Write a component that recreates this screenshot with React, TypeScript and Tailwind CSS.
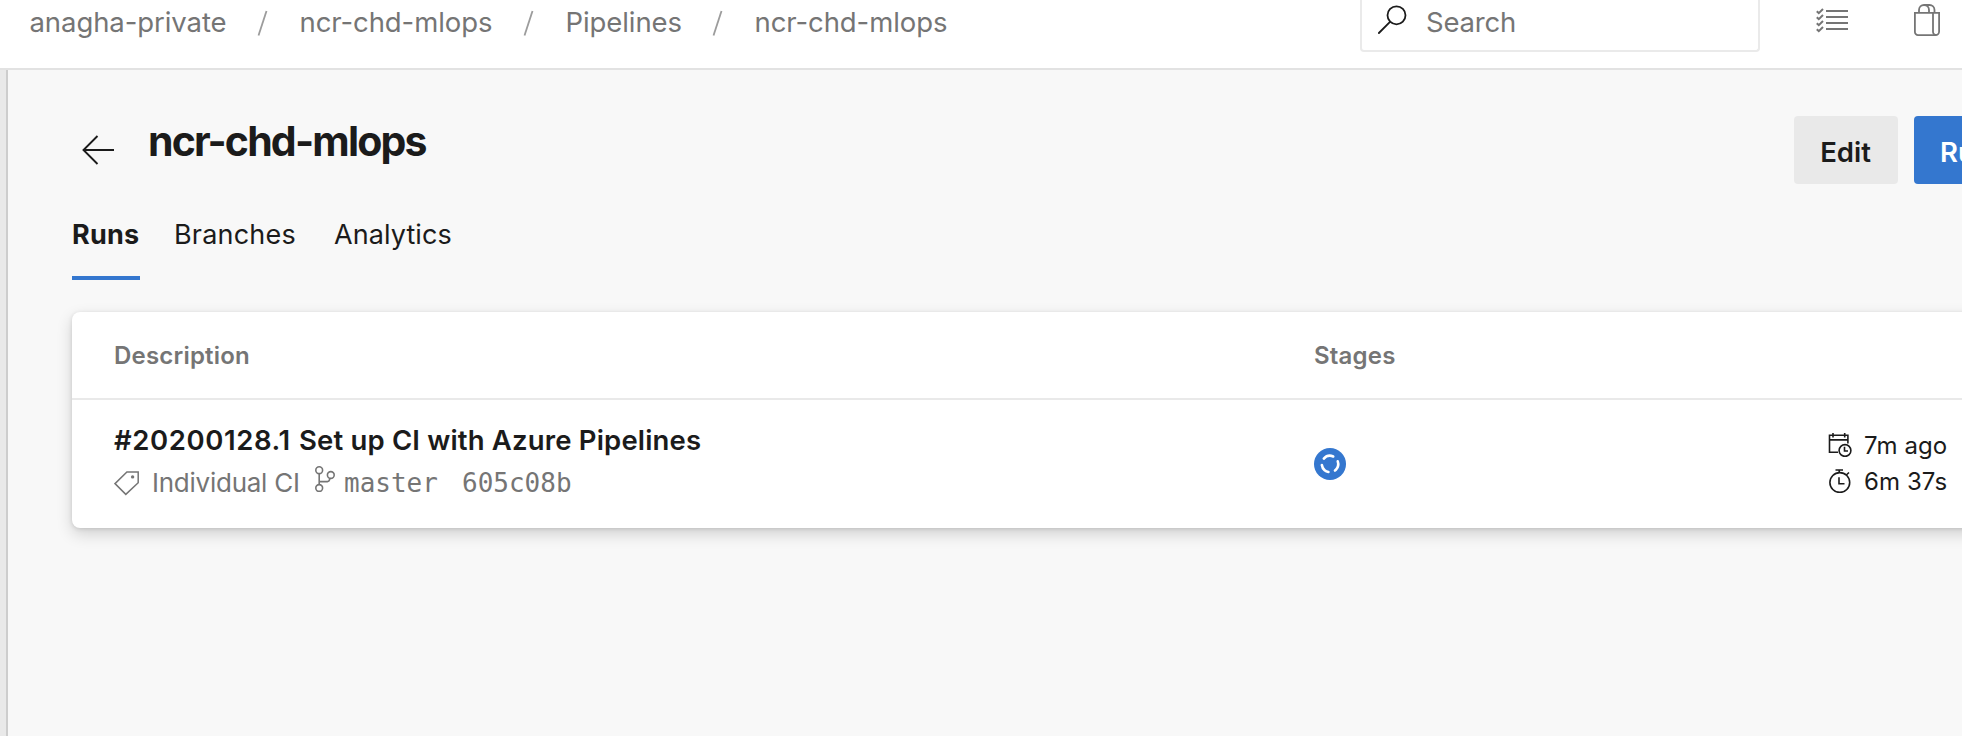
import React from "react";

const crumbs = [
  { label: "anagha-private", width: "w-[198px]" },
  { label: "ncr-chd-mlops", width: "w-[194px]" },
  { label: "Pipelines", width: "w-[117px]" },
  { label: "ncr-chd-mlops", width: "w-[194px]" },
];

function SearchIcon() {
  return (
    <svg className="size-[30px] text-[#1b1b1b]" viewBox="0 0 30 30" fill="none" stroke="currentColor" strokeWidth="1.8">
      <circle cx="18.5" cy="10.3" r="9" />
      <path d="M12 16.8.9 28" strokeLinecap="round" />
    </svg>
  );
}

function ChecklistIcon() {
  return (
    <svg className="h-[26px] w-8" viewBox="0 0 32 26" fill="none" stroke="currentColor">
      <path d="M10 4h22M10 10h22M10 16h22M10 22h22" strokeWidth="2" />
      <path d="M.8 4.2 2.8 6.2 7 2M.8 10.2 2.8 12.2 7 8M.8 16.2 2.8 18.2 7 14M.8 22.2 2.8 24.2 7 20" strokeWidth="2" />
    </svg>
  );
}

function BagIcon() {
  return (
    <svg className="h-8 w-[26px]" viewBox="0 0 26 32" fill="none" stroke="currentColor" strokeWidth="1.8">
      <path d="M.9 8.900h24.200v18.600a3.600 3.600 0 0 1-3.600 3.600H4a3.100 3.100 0 0 1-3.100-3.100Z" />
      <path d="M19 8.900v18.800a3.200 3.200 0 0 0 3.200 3.300" />
      <path d="M5 8.900V6a5 5 0 0 1 5-5c3 0 5 2.200 5 5v2.900M10 1h5.500a5 5 0 0 1 5 5v2.900" />
    </svg>
  );
}

function BackIcon() {
  return (
    <svg className="h-[30px] w-8 text-[#1b1b1b]" viewBox="0 0 32 30" fill="none" stroke="currentColor" strokeWidth="1.9">
      <path d="M32 15H1.500M15.500 1 1.500 15l14 14" />
    </svg>
  );
}

function TagIcon() {
  return (
    <svg className="size-[26px] shrink-0" viewBox="0 0 26 26" fill="none" stroke="currentColor" strokeWidth="1.5">
      <path d="M12.900 1.900h11.300v10.800L11.800 24.400 1 13.600Z" />
      <circle cx="18.600" cy="6.900" r="1.700" fill="currentColor" stroke="none" />
    </svg>
  );
}

function BranchIcon() {
  return (
    <svg className="h-[26px] w-5" viewBox="0 0 20 26" fill="none" stroke="currentColor" strokeWidth="1.6">
      <circle cx="4.200" cy="4.200" r="3.400" />
      <circle cx="4.200" cy="22" r="3.400" />
      <circle cx="15.800" cy="9" r="3.400" />
      <path d="M4.200 7.600v11M4.200 15.600h8.300c1.200 0 2-1 2.400-3.200" />
    </svg>
  );
}

function RunningIcon() {
  return (
    <svg className="size-8" viewBox="0 0 32 32" fill="none">
      <circle cx="16" cy="16" r="16" fill="#3477cf" />
      <circle
        cx="16"
        cy="16"
        r="8.200"
        stroke="#fff"
        strokeWidth="2.600"
        strokeLinecap="round"
        pathLength="360"
        strokeDasharray="72 48"
        transform="rotate(-139 16 16)"
      />
    </svg>
  );
}

function CalendarIcon() {
  return (
    <svg className="size-6" viewBox="0 0 24 24" fill="none" stroke="currentColor" strokeWidth="1.600">
      <path d="M10 19.200H1.500V2.200h18.400v8.300M1.500 6.900h18.400M5 0v4.500M16.700 0v4.500" />
      <circle cx="17" cy="17.500" r="5.900" />
      <path d="M16.500 13.700v4.300h3.500" />
    </svg>
  );
}

function StopwatchIcon() {
  return (
    <svg className="size-6" viewBox="0 0 24 24" fill="none" stroke="currentColor" strokeWidth="1.600">
      <circle cx="11.800" cy="13.500" r="9.900" />
      <path d="M7.500 1h7.500M11.200 1v3M18.300 6l2.700-2.500M11 8.200v6.600h5.500" />
    </svg>
  );
}

function TopBar() {
  return (
    <header className="flex h-[70px] shrink-0 items-start border-b-2 border-[#e2e2e2] bg-white text-[27.5px] text-[#757575]">
      <nav className="flex h-[45px] w-[1330px] items-center pl-[29.500px] tracking-[-0.080px]">
        {crumbs.map((crumb, i) => (
          <React.Fragment key={i}>
            {i > 0 && (
              <svg className="mr-8 ml-[29px] h-[26px] w-[11px] text-[#9c9c9c]" viewBox="0 0 11 26" stroke="currentColor" strokeWidth="1.800">
                <path d="M9.500 1 1.500 25.500" />
              </svg>
            )}
            <span className={crumb.width}>{crumb.label}</span>
          </React.Fragment>
        ))}
      </nav>
      <div className="ml-[30px] flex h-[52px] w-[400px] items-start rounded-b-[4px] border-2 border-t-0 border-[#eaeaea]">
        <div className="flex h-[45px] items-center pl-4">
          <div className="-mt-[5px]">
            <SearchIcon />
          </div>
          <span className="pl-[18px] tracking-[-0.200px]">Search</span>
        </div>
      </div>
      <div className="flex h-10 items-center pl-14">
        <ChecklistIcon />
      </div>
      <div className="flex h-10 items-center pl-[66px]">
        <BagIcon />
      </div>
    </header>
  );
}

function TitleRow() {
  return (
    <div className="flex h-[68px] items-center">
      <div className="shrink-0 pl-[10px]">
        <BackIcon />
      </div>
      <h1 className="w-[1680px] shrink-0 pb-[18px] pl-[34px] text-[41px] leading-[50px] font-bold tracking-[-1.800px]">ncr-chd-mlops</h1>
      <div className="flex shrink-0 gap-4 text-[27.500px] font-semibold">
        <button className="h-[68px] w-[104px] rounded-[4px] bg-[#e9e9e9] pt-[5px] pr-[1px]">Edit</button>
        <button className="h-[68px] w-[210px] rounded-[4px] bg-[#3477cf] pt-[5px] pl-[26px] text-left text-white">Run</button>
      </div>
    </div>
  );
}

function Tabs() {
  return (
    <div className="mt-1 flex h-[92px] text-[27px]">
      <div className="flex w-[68px] items-center border-b-4 border-[#3477cf] pt-[6px] font-bold tracking-[0.200px]">Runs</div>
      <div className="flex w-40 items-center pt-[2px] pl-[34px] tracking-[0.200px]">Branches</div>
      <div className="flex items-center pt-[2px] pl-[34px] tracking-[0.080px]">Analytics</div>
    </div>
  );
}

function RunsCard() {
  return (
    <section className="mt-8 w-[1960px] rounded-[8px] bg-white shadow-[0_6px_16px_rgba(0,0,0,0.16),0_1px_4px_rgba(0,0,0,0.12)]">
      <div className="grid h-[88px] grid-cols-[1200px_514px_auto] items-center border-b-2 border-[#e9e9e9] pt-[2px] pl-[42px] text-[24px] font-semibold text-[#757575]">
        <span className="tracking-[0.200px]">Description</span>
        <span className="tracking-[0.200px]">Stages</span>
      </div>
      <div className="grid h-32 grid-cols-[1200px_514px_auto] pl-[42px]">
        <div className="pt-5">
          <div className="flex h-[41px] items-center gap-2 text-[27.500px] font-semibold">
            <span className="w-[177px] whitespace-nowrap tracking-[0.600px]">#20200128.1</span>
            <span className="whitespace-nowrap tracking-[0.170px]">Set up CI with Azure Pipelines</span>
          </div>
          <div className="flex h-[43px] items-center text-[26px] text-[#757575]">
            <TagIcon />
            <span className="w-[150px] shrink-0 pl-3 whitespace-nowrap tracking-[-0.250px]">Individual CI</span>
            <div className="pb-[7px] pl-[25px]">
              <BranchIcon />
            </div>
            <span className="w-[127px] shrink-0 pt-[2px] pl-[9px] font-['DejaVu_Sans_Mono',monospace]">master</span>
            <span className="pt-[2px] font-['DejaVu_Sans_Mono',monospace]">605c08b</span>
          </div>
        </div>
        <div className="flex items-center">
          <RunningIcon />
        </div>
        <div className="pt-[27px] text-[24px]">
          <div className="flex h-9 items-center gap-3">
            <CalendarIcon />
            <span className="pt-[2px] tracking-[0.080px]">7m ago</span>
          </div>
          <div className="flex h-9 items-center gap-3">
            <StopwatchIcon />
            <span className="pt-[2px] tracking-[0.080px]">6m 37s</span>
          </div>
        </div>
      </div>
    </section>
  );
}

export default function App() {
  return (
    <div className="flex h-[736px] w-[1962px] flex-col overflow-hidden bg-[#f8f8f8] font-['Inter',sans-serif] text-[#1b1b1b]">
      <TopBar />
      <div className="flex min-h-0 flex-1">
        <aside className="w-2 shrink-0 border-r-2 border-[#cdcdcd] bg-[#e9e9e9]" />
        <main className="min-w-0 flex-1 overflow-hidden pt-[46px] pl-16">
          <TitleRow />
          <Tabs />
          <RunsCard />
        </main>
      </div>
    </div>
  );
}
